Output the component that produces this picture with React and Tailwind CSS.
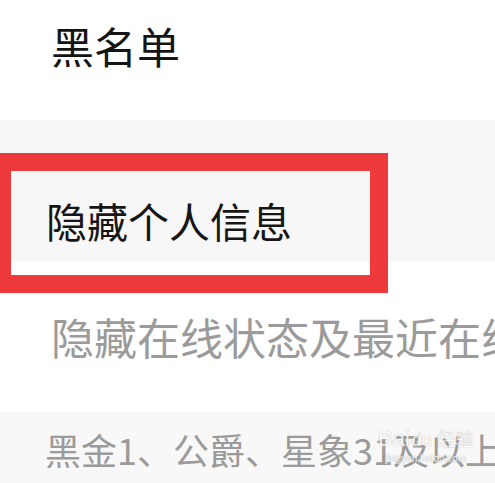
import React from "react";

export default function App() {
  const cjk = { fontFamily: '"Noto Sans CJK SC", "Noto Sans", sans-serif' };
  return (
    <div className="relative w-[495px] h-[483px] overflow-hidden bg-white" style={cjk}>
      <div className="h-[120px] bg-white pt-[24px] pl-[51px]">
        <div className="text-[43px] leading-none text-[#141414]">黑名单</div>
      </div>
      <div className="h-[142px] bg-[#f7f7f7] pt-[80px] pl-[46px]">
        <div className="text-[41px] leading-none text-[#161616]">隐藏个人信息</div>
      </div>
      <div className="h-[150px] bg-white pt-[53px] pl-[51px]">
        <div className="text-[43px] leading-none text-[#9b9b9b] whitespace-nowrap">隐藏在线状态及最近在线时间</div>
      </div>
      <div className="h-[71px] bg-[#f8f8f8] pt-[19px] pl-[45px]">
        <div className="text-[36px] leading-none text-[#9b9b9b] whitespace-nowrap">黑金1、公爵、星象31及以上用户</div>
      </div>

      <div className="absolute left-[-7px] top-[153px] w-[395px] h-[140px] border-[18px] border-[#ee3a3a]" />

      <div className="absolute left-[378px] top-[428px] flex flex-col items-center opacity-75">
        <div className="flex items-baseline text-[22px] leading-none text-white [text-shadow:0_0_1px_#aaa,0_0_1px_#aaa]" style={{ fontFamily: '"Liberation Sans", "Noto Sans CJK SC", sans-serif' }}>
          <span>Bai</span>
          <span className="text-[18px] ml-[2px]">du</span>
          <span className="text-[18px] ml-[6px]">经验</span>
        </div>
        <div className="text-[10px] leading-none mt-[4px] text-white [text-shadow:0_0_1px_#aaa,0_0_1px_#aaa]" style={{ fontFamily: '"Liberation Sans", sans-serif' }}>
          jingyan.baidu.com
        </div>
      </div>
    </div>
  );
}
